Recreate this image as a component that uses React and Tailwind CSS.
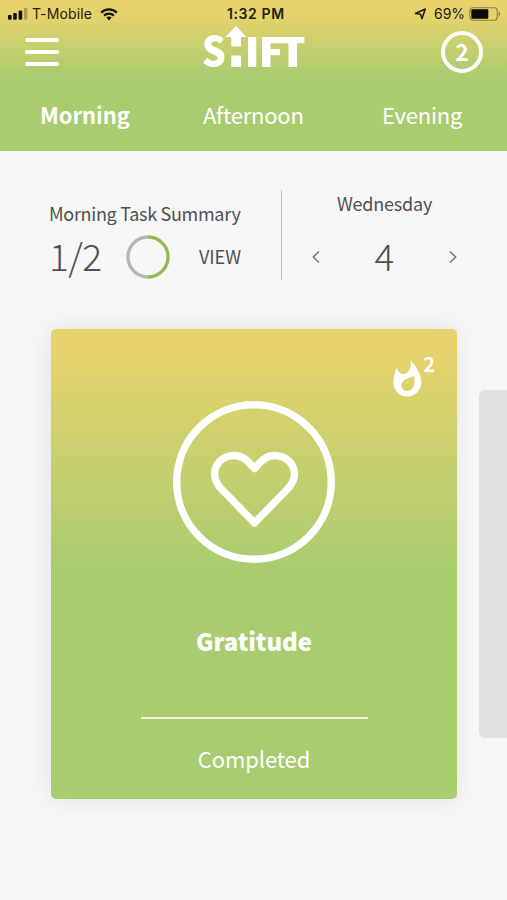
function StatusBar() {
  return (
    <div className="relative flex h-[28px] items-center justify-between pl-[8px] pr-[6px] font-['Inter','Liberation_Sans',sans-serif] text-[14px] leading-[28px] text-[#25200c]">
      <div className="flex items-center">
        <svg className="h-[12px] w-[20px]" viewBox="0 0 20 12">
          <rect x="0" y="7" width="3.6" height="4.8" rx="1" fill="#14110a" />
          <rect x="5.2" y="5" width="3.6" height="6.8" rx="1" fill="#14110a" />
          <rect x="10.6" y="2.6" width="3.6" height="9.2" rx="1" fill="#14110a" />
          <rect x="16" y="0" width="3.4" height="11.8" rx="1" fill="#14110a" opacity="0.28" />
        </svg>
        <span className="ml-[4px] w-[60px] whitespace-nowrap tracking-[0.12px]">T-Mobile</span>
        <svg className="ml-[8px] h-[13px] w-[18px]" viewBox="0 0 18 13" fill="none" stroke="#14110a" strokeWidth="2.3">
          <path d="M1.2 4.6C5.4 .3 12.6 .3 16.8 4.6" />
          <path d="M4.1 7.6c2.7-2.7 7.1-2.7 9.8 0" />
          <path d="M6.4 9.6c1.5-1.5 3.7-1.5 5.2 0L9 12.4Z" fill="#14110a" stroke="none" />
        </svg>
      </div>
      <div className="absolute left-[227px] w-[60px] whitespace-nowrap font-semibold tracking-[0.6px]">1:32 PM</div>
      <div className="flex items-center">
        <svg className="h-[12px] w-[13px]" viewBox="0 0 13 12" fill="none" stroke="#25200c" strokeWidth="1.6" strokeLinejoin="round">
          <path d="M11.3 1 1.5 5.4 6.5 6.2 8 10.6Z" />
        </svg>
        <span className="ml-[7px] w-[31px] whitespace-nowrap">69%</span>
        <svg className="ml-[4px] h-[14px] w-[32px]" viewBox="0 0 32 14">
          <rect x=".8" y=".8" width="27.4" height="12.4" rx="3" fill="none" stroke="#8a7d3d" strokeWidth="1.1" />
          <rect x="2.3" y="2.3" width="17" height="9.4" rx="1" fill="#0c0a04" />
          <path d="M29.6 4.6c2 .8 2 4 0 4.8Z" fill="#8a7d3d" />
        </svg>
      </div>
    </div>
  );
}

function Logo() {
  return (
    <div className="relative h-[42px] w-[102px] text-white">
      <span className="absolute left-[-1px] top-[2px] origin-left scale-x-[0.93] font-['Noto_Sans_CJK_SC',sans-serif] text-[40px] font-black leading-[42px]">
        S
      </span>
      <svg className="absolute left-0 top-0 h-[42px] w-[102px]" viewBox="0 0 102 42" fill="currentColor">
        <path d="M33 0 43.500 11H38V20.500H28.300V11H22.500Z" />
        <rect x="28.300" y="29.500" width="9.700" height="11.500" />
        <rect x="45" y="11" width="8.300" height="30" />
        <path d="M59 11h42.500v6.300H94V41h-8.500V17.300H67.500v5.700h9.500v6.300h-9.500V41H59Z" />
      </svg>
    </div>
  );
}

function Header() {
  return (
    <header className="h-[151px] bg-[linear-gradient(180deg,#e9d36c_0px,#e3d26c_18px,#a9cc70_76px,#a9cc70_151px)]">
      <StatusBar />
      <div className="flex h-[48px] items-start justify-between pl-[25px] pr-[24px]">
        <div className="mt-[10px] flex w-[42px] flex-col gap-[8px]">
          <div className="h-[4px] w-[34px] rounded-full bg-white" />
          <div className="h-[4px] w-[34px] rounded-full bg-white" />
          <div className="h-[4px] w-[34px] rounded-full bg-white" />
        </div>
        <div className="mt-[-2px]">
          <Logo />
        </div>
        <div className="mt-[3px] flex h-[42px] w-[42px] items-center justify-center rounded-full border-4 border-white pb-[1px] text-[23px] font-bold leading-[33px] text-white">
          2
        </div>
      </div>
      <nav className="flex pl-[40px] pt-[22px] text-[22px] leading-[32px] text-white">
        <span className="w-[163px] whitespace-nowrap font-bold tracking-[-0.05px]">Morning</span>
        <span className="w-[179px] whitespace-nowrap tracking-[-0.2px]">Afternoon</span>
        <span className="whitespace-nowrap tracking-[-0.2px]">Evening</span>
      </nav>
    </header>
  );
}

function Summary() {
  return (
    <section className="mt-[39px] flex h-[90px] text-[#505050]">
      <div className="w-[281px] pl-[49px] pt-[10px]">
        <div className="whitespace-nowrap text-[18px] leading-[26px] tracking-[-0.3px]">Morning Task Summary</div>
        <div className="mt-[1px] flex h-[60px] items-center">
          <span className="mt-[-4px] w-[77px] whitespace-nowrap text-[37px] font-light leading-[60px] tracking-[-0.6px]">1/2</span>
          <svg className="h-[44px] w-[44px]" viewBox="0 0 44 44" fill="none" strokeWidth="3.4">
            <path d="M22 42A20 20 0 0 1 22 2" stroke="#b5b5b5" />
            <path d="M22 2a20 20 0 0 1 0 40" stroke="#93ba55" />
          </svg>
          <span className="ml-[29px] mt-[-2px] whitespace-nowrap text-[18px]">VIEW</span>
        </div>
      </div>
      <div className="w-px bg-[#c4c4c4]" />
      <div className="w-[205px]">
        <div className="text-center text-[18px] leading-[26px] tracking-[-0.2px]">Wednesday</div>
        <div className="mt-[11px] flex h-[60px] items-center justify-between pl-[30px] pr-[30px]">
          <svg className="h-[14px] w-[8px]" viewBox="0 0 8 14" fill="none" stroke="#707070" strokeWidth="1.4">
            <path d="M7 1.5 1.3 7 7 12.5" />
          </svg>
          <span className="mt-[-4px] text-[37px] font-light leading-[60px]">4</span>
          <svg className="h-[14px] w-[8px]" viewBox="0 0 8 14" fill="none" stroke="#707070" strokeWidth="1.4">
            <path d="M1 1.5 6.7 7 1 12.5" />
          </svg>
        </div>
      </div>
    </section>
  );
}

function TaskCard() {
  return (
    <article className="flex h-[470px] w-[406px] flex-col items-center rounded-[5px] bg-[linear-gradient(180deg,#e8d36c_0%,#e5d36c_6%,#a9cc70_51%,#a9cc70_100%)] text-white shadow-[0_0_22px_rgba(0,0,0,0.09)]">
      <div className="flex h-[72px] w-full justify-end pr-[22px] pt-[31px]">
        <svg className="h-[38px] w-[29px]" viewBox="0 0 29 38" fill="currentColor">
          <path
            fillRule="evenodd"
            d="M17.500 0C22 5.500 28.300 13 28.300 22.500A14 14 0 0 1 .300 22.500C.300 16 2 11.500 3.800 7.500 4.800 11.500 7 14 10.500 14 15.500 14 18.800 8 17.500 0ZM20.800 15.500C18 18.500 8.300 18.500 8.300 25.500 8.300 29 11 31 14 31 20.500 31 22.800 23.500 20.800 15.500Z"
          />
        </svg>
        <span className="ml-[1px] mt-[-10px] text-[20px] font-bold leading-[28px]">2</span>
      </div>
      <svg className="h-[162px] w-[162px] shrink-0" viewBox="0 0 162 162" fill="none" stroke="currentColor" strokeWidth="7.400">
        <circle cx="81" cy="81" r="77.300" />
        <path
          strokeLinejoin="round"
          d="M81.500 122 48 87.500C34 72 45 54.500 61.500 54.500 70 54.500 75 60 81.500 67.500 88 60 93 54.500 101.500 54.500 118 54.500 129 72 115 87.500Z"
        />
      </svg>
      <h2 className="mt-[61px] whitespace-nowrap text-[24px] font-black leading-[34px] tracking-[-0.1px]">Gratitude</h2>
      <div className="mt-[59px] h-[2px] w-[227px] bg-[#edf4de]" />
      <div className="mt-[23px] whitespace-nowrap text-[22px] leading-[32px] tracking-[-0.1px]">Completed</div>
    </article>
  );
}

export default function App() {
  return (
    <div className="h-[900px] w-[507px] overflow-hidden bg-[#f7f7f7] font-['Noto_Sans_CJK_SC','Noto_Sans',sans-serif]">
      <Header />
      <Summary />
      <main className="mt-[49px] flex items-start pl-[51px]">
        <TaskCard />
        <div className="ml-[22px] mt-[61px] h-[348px] w-[28px] rounded-l-[6px] bg-[#e1e1e1]" />
      </main>
    </div>
  );
}
